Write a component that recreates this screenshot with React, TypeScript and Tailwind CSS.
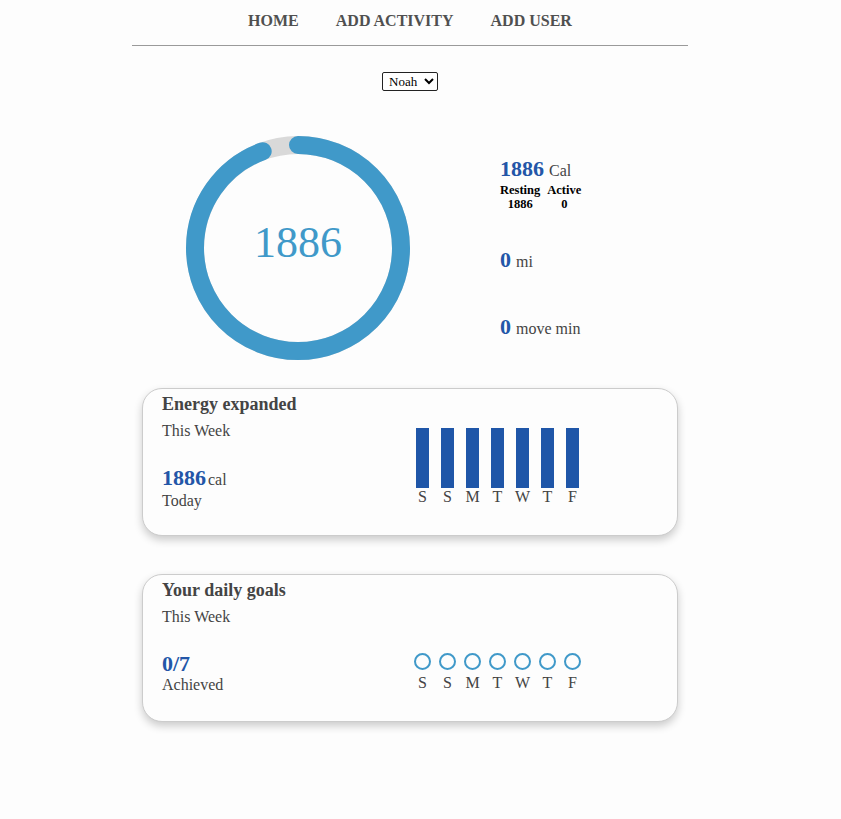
import React from "react";

const days = ["S", "S", "M", "T", "W", "T", "F"];

function Ring() {
  const size = 224;
  const stroke = 18;
  const r = (size - stroke) / 2;
  const c = 2 * Math.PI * r;
  const pct = 1886 / 2000;
  return (
    <div className="relative w-[224px] h-[224px] shrink-0">
      <svg width={size} height={size} viewBox={`0 0 ${size} ${size}`}>
        <circle cx={size / 2} cy={size / 2} r={r} fill="none" stroke="#d9d9d9" strokeWidth={stroke} />
        <circle
          cx={size / 2}
          cy={size / 2}
          r={r}
          fill="none"
          stroke="#4099c9"
          strokeWidth={stroke}
          strokeLinecap="round"
          strokeDasharray={`${c * pct} ${c}`}
          transform={`rotate(-90 ${size / 2} ${size / 2})`}
        />
      </svg>
      <div className="absolute inset-0 flex items-center justify-center text-[44px] leading-none text-[#4099c9] pb-[10px]">
        1886
      </div>
    </div>
  );
}

function Card({
  title,
  value,
  unit,
  caption,
  children,
  rightPad,
}: {
  title: string;
  value: string;
  unit?: string;
  caption: string;
  children: React.ReactNode;
  rightPad: string;
}) {
  return (
    <div className="w-[536px] h-[148px] mx-auto border border-[#cccccc] rounded-[20px] bg-[#fdfdfd] shadow-[0_4px_8px_rgba(0,0,0,0.2)] flex">
      <div className="w-[267px] pl-[19px] pt-[5px] text-[#444444]">
        <div className="text-[18px] leading-[21px] font-bold">{title}</div>
        <div className="mt-[7px] text-[16px] leading-[18px]">This Week</div>
        <div className="mt-[26px] flex items-baseline leading-[24px]">
          <span className="text-[22px] font-bold text-[#2356a8]">{value}</span>
          {unit && <span className="text-[16px] ml-[2px]">{unit}</span>}
        </div>
        <div className="text-[16px] leading-[18px]">{caption}</div>
      </div>
      <div className={rightPad}>{children}</div>
    </div>
  );
}

export default function App() {
  return (
    <div className="min-h-screen w-full bg-[#fdfdfd] font-['Liberation_Serif',serif] text-[#444444]">
      <div className="w-[820px]">
        <nav className="w-[556px] mx-auto h-[46px] border-b border-[#9a9a9a] flex justify-center items-center gap-[37px] pb-[3px] text-[16px] font-bold text-[#505050]">
          <span>HOME</span>
          <span>ADD ACTIVITY</span>
          <span>ADD USER</span>
        </nav>

        <div className="flex justify-center mt-[26px]">
          <select className="w-[56px] h-[19px] border border-[#222] rounded-[2px] text-[13px] leading-none text-black bg-white pl-[2px]">
            <option>Noah</option>
          </select>
        </div>

        <div className="w-[536px] mx-auto mt-[45px] flex">
          <div className="ml-[44px]">
            <Ring />
          </div>
          <div className="ml-[90px] pt-[21px]">
            <div className="flex items-baseline leading-[24px]">
              <span className="text-[22px] font-bold text-[#2356a8]">1886</span>
              <span className="text-[16px] ml-[5px]">Cal</span>
            </div>
            <div className="flex gap-[7px] text-[12.5px] font-bold text-black leading-[14px]">
              <div className="flex flex-col items-center">
                <span>Resting</span>
                <span>1886</span>
              </div>
              <div className="flex flex-col items-center">
                <span>Active</span>
                <span>0</span>
              </div>
            </div>
            <div className="mt-[36px] flex items-baseline leading-[26px]">
              <span className="text-[22px] font-bold text-[#2356a8]">0</span>
              <span className="text-[16px] ml-[5px]">mi</span>
            </div>
            <div className="mt-[39px] flex items-baseline leading-[26px]">
              <span className="text-[22px] font-bold text-[#2356a8]">0</span>
              <span className="text-[16px] ml-[5px]">move min</span>
            </div>
          </div>
        </div>

        <div className="mt-[28px]">
          <Card title="Energy expanded" value="1886" unit="cal" caption="Today" rightPad="pt-[39px] flex">
            {days.map((d, i) => (
              <div key={i} className="w-[25px] flex flex-col items-center">
                <div className="w-[13px] h-[60px] bg-[#1f56a8]" />
                <span className="text-[16px] leading-[18px]">{d}</span>
              </div>
            ))}
          </Card>
        </div>

        <div className="mt-[38px]">
          <Card title="Your daily goals" value="0/7" caption="Achieved" rightPad="pt-[78px] flex">
            {days.map((d, i) => (
              <div key={i} className="w-[25px] flex flex-col items-center">
                <div className="w-[17px] h-[17px] rounded-full border-2 border-[#4099c9]" />
                <span className="mt-[4px] text-[16px] leading-[18px]">{d}</span>
              </div>
            ))}
          </Card>
        </div>
      </div>
    </div>
  );
}
